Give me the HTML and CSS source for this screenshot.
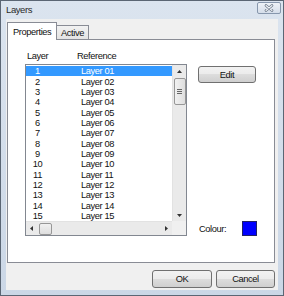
FILE: index.html
```html
<!DOCTYPE html>
<html>
    <head>
        <title>Layers</title>
        <link rel="stylesheet" href="styles.css">
    </head>
    <body>
        <div class="window">
            <div class="titlebar">
                <span class="title">Layers</span>
                <div class="close">
                    <svg width="10" height="8" viewBox="0 0 10 8">
                        <path d="M2 1.5 L8 6.5 M8 1.5 L2 6.5" stroke="#6b7888" stroke-width="2.6" stroke-linecap="round"/>
                        <path d="M2 1.5 L8 6.5 M8 1.5 L2 6.5" stroke="#f4f6f9" stroke-width="1.1" stroke-linecap="round"/>
                    </svg>
                </div>
            </div>
            <div class="client">
                <div class="tabs">
                    <div class="tab tab-on">Properties</div>
                    <div class="tab">Active</div>
                </div>
                <div class="panel">
                    <div class="list-col">
                        <div class="list-head">
                            <span class="col-num">Layer</span>
                            <span class="col-ref">Reference</span>
                        </div>
                        <div class="listbox">
                            <div class="rows" id="rows"></div>
                            <div class="vscroll">
                                <div class="arrow">
                                    <svg width="5" height="3" viewBox="0 0 5 3"><path d="M0 3 L2.5 0 L5 3 Z" fill="#333"/></svg>
                                </div>
                                <div class="vthumb"><span></span><span></span><span></span></div>
                                <div class="track"></div>
                                <div class="arrow">
                                    <svg width="5" height="3" viewBox="0 0 5 3"><path d="M0 0 L2.5 3 L5 0 Z" fill="#333"/></svg>
                                </div>
                            </div>
                            <div class="hscroll">
                                <div class="arrow">
                                    <svg width="3" height="5" viewBox="0 0 3 5"><path d="M3 0 L0 2.5 L3 5 Z" fill="#333"/></svg>
                                </div>
                                <div class="hthumb"></div>
                                <div class="track"></div>
                                <div class="arrow">
                                    <svg width="3" height="5" viewBox="0 0 3 5"><path d="M0 0 L3 2.5 L0 5 Z" fill="#333"/></svg>
                                </div>
                            </div>
                            <div class="corner"></div>
                        </div>
                    </div>
                    <div class="side-col">
                        <button class="btn btn-edit">Edit</button>
                        <div class="colour">
                            <span>Colour:</span>
                            <span class="swatch"></span>
                        </div>
                    </div>
                </div>
                <div class="footer">
                    <button class="btn btn-ok">OK</button>
                    <button class="btn btn-cancel">Cancel</button>
                </div>
            </div>
        </div>
        <script>
            const rowsElem = document.getElementById("rows");
            for(let i = 1; i <= 15; i++){
                const num = i < 10 ? "0" + i : "" + i;
                const cls = i === 1 ? "row row-sel" : "row";
                rowsElem.innerHTML += `<div class="${cls}"><span class="col-num">${i}</span><span class="col-ref">Layer ${num}</span></div>`;
            }
        </script>
    </body>
</html>
```

FILE: styles.css
```css
body{
    margin: 0;
    font-family: "Liberation Sans", Arial, sans-serif;
    font-size: 9.3px;
    letter-spacing: -0.4px;
    color: #111;
}
.window{
    box-sizing: border-box;
    width: 284px;
    height: 296px;
    border: 1px solid #5b6674;
    background: linear-gradient(#dbe4ef, #cbd7e6);
    padding: 0 5px 5px 5px;

    display: flex;
    flex-direction: column;
}
.titlebar{
    height: 19px;
    display: flex;
    align-items: center;
    justify-content: space-between;
}
.title{
    color: #2a2a2a;
    font-size: 9.5px;
    margin-top: -2px;
}
.close{
    box-sizing: border-box;
    width: 24px;
    height: 12px;
    margin-right: -3px;
    margin-top: -4px;
    border: 1px solid #8797ad;
    border-radius: 2px;
    background: linear-gradient(#eef2f7, #d5deea);

    display: flex;
    align-items: center;
    justify-content: center;
}
.client{
    flex: 1;
    background-color: #f0f0f0;
    padding: 3px 3px 2px 1px;

    display: flex;
    flex-direction: column;
}
.tabs{
    display: flex;
    align-items: flex-end;
    height: 17px;
    position: relative;
    z-index: 1;
}
.tab{
    box-sizing: border-box;
    height: 14px;
    padding: 0 4px;
    border: 1px solid #898c95;
    border-bottom: none;
    border-left: none;
    background: linear-gradient(#f2f2f2, #e3e3e3);
    display: flex;
    align-items: center;
}
.tab-on{
    height: 18px;
    width: 50px;
    margin-bottom: -1px;
    padding: 0 5px;
    border-left: 1px solid #898c95;
    background: #ffffff;
}
.panel{
    flex: 1;
    background-color: #ffffff;
    border: 1px solid #898c95;
    padding: 11px 0 26px 17px;

    display: flex;
    flex-direction: row;
}
.list-col{
    display: flex;
    flex-direction: column;
}
.list-head{
    height: 10px;
    margin-bottom: 3px;
    display: flex;
    align-items: center;
}
.list-head .col-num{
    width: 50px;
    padding-left: 2px;
}
.listbox{
    box-sizing: border-box;
    flex: 1;
    width: 162px;
    border: 1px solid #828790;

    display: grid;
    grid-template-columns: 1fr 14px;
    grid-template-rows: 1fr 14px;
}
.rows{
    padding-top: 1px;
    overflow: hidden;
}
.row{
    height: 10.33px;
    display: flex;
    align-items: center;
}
.row .col-num{
    width: 23px;
    text-align: center;
}
.row .col-ref{
    padding-left: 32px;
}
.row-sel{
    background-color: #3399ff;
    color: #ffffff;
}
.vscroll{
    background-color: #eaeaea;
    border-left: 1px solid #e2e2e2;
    display: flex;
    flex-direction: column;
    align-items: center;
}
.hscroll{
    background-color: #eaeaea;
    border-top: 1px solid #e2e2e2;
    display: flex;
    flex-direction: row;
    align-items: center;
}
.vscroll .arrow{
    height: 12px;
    width: 100%;
    display: flex;
    align-items: center;
    justify-content: center;
}
.hscroll .arrow{
    width: 11px;
    height: 100%;
    display: flex;
    align-items: center;
    justify-content: center;
}
.track{
    flex: 1;
}
.vthumb{
    box-sizing: border-box;
    width: 12px;
    height: 27px;
    margin-top: 1px;
    border: 1px solid #979797;
    border-radius: 2px;
    background: linear-gradient(to right, #f1f1f1, #dedede);

    display: flex;
    flex-direction: column;
    align-items: center;
    justify-content: center;
    gap: 1px;
}
.vthumb span{
    width: 5px;
    height: 1px;
    background-color: #666;
}
.hthumb{
    box-sizing: border-box;
    width: 13px;
    height: 12px;
    margin-left: 2px;
    border: 1px solid #979797;
    border-radius: 2px;
    background: linear-gradient(#f1f1f1, #dedede);
}
.corner{
    background-color: #f0f0f0;
}
.side-col{
    flex: 1;
    padding: 15px 0 0 11px;

    display: flex;
    flex-direction: column;
    justify-content: space-between;
}
.btn{
    box-sizing: border-box;
    font-family: "Liberation Sans", Arial, sans-serif;
    font-size: 9.3px;
    letter-spacing: -0.4px;
    color: #111;
    border: 1px solid #707070;
    border-radius: 3px;
    background: linear-gradient(#f2f2f2 0%, #ebebeb 50%, #dddddd 50%, #cfcfcf 100%);
    padding: 0;
    cursor: pointer;
}
.btn-edit{
    width: 58px;
    height: 17px;
}
.colour{
    display: flex;
    align-items: center;
    padding-left: 1px;
}
.swatch{
    box-sizing: border-box;
    width: 15px;
    height: 15px;
    margin-left: 16px;
    background-color: #0000ff;
    border: 1px solid #222266;
}
.footer{
    margin-top: 7px;
    display: flex;
    justify-content: flex-end;
    gap: 4px;
}
.btn-ok{
    width: 60px;
    height: 18px;
}
.btn-cancel{
    width: 59px;
    height: 18px;
}
```
